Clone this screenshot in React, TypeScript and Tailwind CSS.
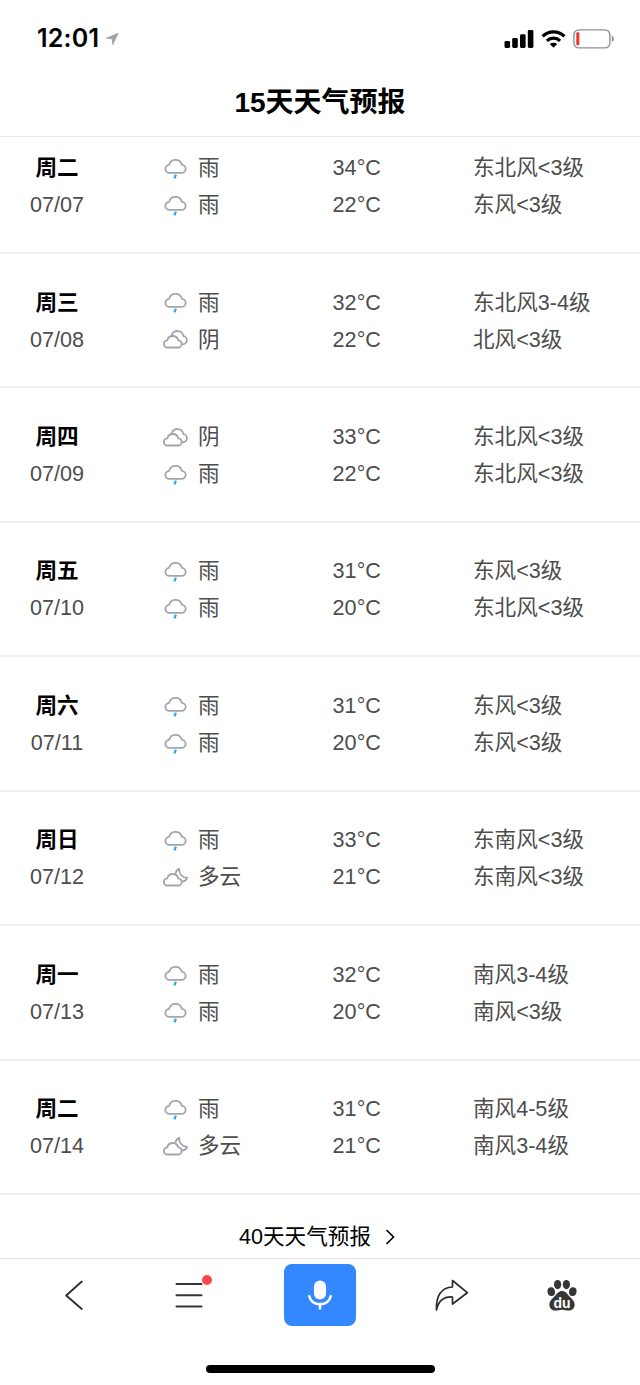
import type { ReactNode } from 'react';

type Weather = 'rain' | 'overcast' | 'cloudy';

interface Forecast {
  weather: Weather;
  temp: number;
  wind: string;
}

interface Day {
  weekday: string;
  date: string;
  day: Forecast;
  night: Forecast;
}

const WEATHER_LABELS: Record<Weather, string> = {
  rain: '雨',
  overcast: '阴',
  cloudy: '多云',
};

const days: Day[] = [
  {
    weekday: '周二',
    date: '07/07',
    day: { weather: 'rain', temp: 34, wind: '东北风<3级' },
    night: { weather: 'rain', temp: 22, wind: '东风<3级' },
  },
  {
    weekday: '周三',
    date: '07/08',
    day: { weather: 'rain', temp: 32, wind: '东北风3-4级' },
    night: { weather: 'overcast', temp: 22, wind: '北风<3级' },
  },
  {
    weekday: '周四',
    date: '07/09',
    day: { weather: 'overcast', temp: 33, wind: '东北风<3级' },
    night: { weather: 'rain', temp: 22, wind: '东北风<3级' },
  },
  {
    weekday: '周五',
    date: '07/10',
    day: { weather: 'rain', temp: 31, wind: '东风<3级' },
    night: { weather: 'rain', temp: 20, wind: '东北风<3级' },
  },
  {
    weekday: '周六',
    date: '07/11',
    day: { weather: 'rain', temp: 31, wind: '东风<3级' },
    night: { weather: 'rain', temp: 20, wind: '东风<3级' },
  },
  {
    weekday: '周日',
    date: '07/12',
    day: { weather: 'rain', temp: 33, wind: '东南风<3级' },
    night: { weather: 'cloudy', temp: 21, wind: '东南风<3级' },
  },
  {
    weekday: '周一',
    date: '07/13',
    day: { weather: 'rain', temp: 32, wind: '南风3-4级' },
    night: { weather: 'rain', temp: 20, wind: '南风<3级' },
  },
  {
    weekday: '周二',
    date: '07/14',
    day: { weather: 'rain', temp: 31, wind: '南风4-5级' },
    night: { weather: 'cloudy', temp: 21, wind: '南风3-4级' },
  },
];

const WeatherIcon = ({ weather }: { weather: Weather }) => (
  <svg
    width="28"
    height="24"
    viewBox="0 0 28 24"
    fill="none"
    stroke="#a4a4ae"
    strokeWidth="1.8"
    strokeLinecap="round"
    strokeLinejoin="round"
  >
    {weather === 'rain' && (
      <>
        <path d="M7.6 16.9a4 4 0 0 1-.5-8 6.6 6.6 0 0 1 12.8 0 4 4 0 0 1-.5 8z" />
        <path d="M13.9 18.600l-1.500 3.800" stroke="#2ba7e8" strokeWidth="2.200" strokeLinecap="butt" />
      </>
    )}
    {weather === 'overcast' && (
      <>
        <path d="M5.6 20.500a3.600 3.600 0 0 1-.3-7.200 5.600 5.600 0 0 1 10.900 0 3.600 3.600 0 0 1-.3 7.200z" />
        <path d="M9.800 8a6 6 0 0 1 11.600 1.200 4 4 0 0 1-1 8" />
      </>
    )}
    {weather === 'cloudy' && (
      <>
        <path d="M5.6 20.500a3.600 3.600 0 0 1-.3-7.200 5.600 5.600 0 0 1 10.900 0 3.600 3.600 0 0 1-.3 7.200z" />
        <path d="M13.600 8.200c.3-2.100 1.500-3.600 3.600-4.400-.4 4.800 2.600 8.600 8 9.200-1 2.100-2.500 3.200-4.600 3.500" />
      </>
    )}
  </svg>
);

const StatusBar = () => (
  <div className="flex h-[76px] items-center justify-between pl-[37px] pr-[25px] pt-px">
    <div className="flex items-center gap-[7px]">
      <span className="font-['Inter',sans-serif] text-[25px] font-semibold leading-none tracking-[0.2px]">
        12:01
      </span>
      <svg width="13" height="12" viewBox="0 0 13 12" fill="#a3a3a3">
        <path d="M12.200.2L.3 5.200l5.900.6.6 5.800z" stroke="#a3a3a3" strokeWidth=".8" />
      </svg>
    </div>
    <div className="flex items-center gap-[7px]">
      <svg width="30" height="18" viewBox="0 0 30 18">
        <rect x=".5" y="11" width="5.600" height="7" rx="1.400" />
        <rect x="8.200" y="8" width="5.600" height="10" rx="1.400" />
        <rect x="16" y="4.300" width="5.600" height="13.700" rx="1.400" />
        <rect x="23.800" y="0" width="5.600" height="18" rx="1.400" />
      </svg>
      <svg width="25" height="18" viewBox="0 0 25 18">
        <g fill="none" stroke="#000" strokeWidth="3.200">
          <path d="M1.600 6.300a15.800 15.800 0 0 1 21.800 0" />
          <path d="M5.900 10.800a9.600 9.600 0 0 1 13.200 0" />
        </g>
        <path d="M12.500 17.800l-3.700-3.700a5.400 5.400 0 0 1 7.400 0z" />
      </svg>
      <svg width="42" height="20" viewBox="0 0 42 20">
        <rect x=".9" y=".9" width="36" height="18" rx="5" fill="none" stroke="#919191" strokeWidth="1.400" />
        <rect x="3.300" y="3.300" width="3" height="13" rx="1" fill="#f0352b" />
        <path d="M38.800 6.800c2.800.8 2.800 5.400 0 6.200z" fill="#919191" />
      </svg>
    </div>
  </div>
);

const ForecastLine = ({ weather, temp, wind }: Forecast) => (
  <div className="flex h-[37px] items-center">
    <div className="flex w-[170.6px] items-center gap-2">
      <WeatherIcon weather={weather} />
      <span>{WEATHER_LABELS[weather]}</span>
    </div>
    <span className="w-[140.4px]">{temp}°C</span>
    <span>{wind}</span>
  </div>
);

const DayRow = ({ weekday, date, day, night }: Day) => (
  <li className="flex h-[134.45px] items-end border-b-2 border-[#f0f0f0] pb-[28.6px] first:h-[117px]">
    <div className="mr-12 w-[114px] text-center">
      <div className="flex h-[37px] items-center justify-center font-bold text-black">{weekday}</div>
      <div className="flex h-[37px] items-center justify-center">{date}</div>
    </div>
    <div>
      <ForecastLine {...day} />
      <ForecastLine {...night} />
    </div>
  </li>
);

const ToolbarButton = ({ label, children }: { label: string; children: ReactNode }) => (
  <button aria-label={label} className="flex h-[62px] w-[72px] items-center justify-center">
    {children}
  </button>
);

const Toolbar = () => (
  <nav className="grid h-[73px] grid-cols-[115px_131px_132px_110px_72px] items-start border-t border-[#e2e2e2] pl-[38px] pt-[5px]">
    <ToolbarButton label="返回">
      <svg width="20" height="32" viewBox="0 0 20 32" fill="none" stroke="#2d2b2c" strokeWidth="1.800">
        <path d="M17.800 2.500L2.200 16.500l15.600 13.500" strokeLinecap="round" strokeLinejoin="round" />
      </svg>
    </ToolbarButton>
    <ToolbarButton label="菜单">
      <span className="relative">
        <svg width="28" height="28" viewBox="0 0 28 28" stroke="#383434" strokeWidth="2" strokeLinecap="round">
          <path d="M1.500 3h25M1.500 14.300h25M1.500 25.600h25" />
        </svg>
        <span className="absolute -right-[9px] -top-[6px] size-[10px] rounded-full bg-[#fb4a4c]" />
      </span>
    </ToolbarButton>
    <button aria-label="语音" className="flex h-[62px] w-[72px] items-center justify-center rounded-lg bg-[#3388ff]">
      <svg width="26" height="32" viewBox="0 0 26 32" fill="none">
        <rect x="7" y="1.500" width="12" height="19" rx="6" fill="#fff" />
        <path
          d="M2.300 17.200c1 4.600 5 8 10.700 8s9.700-3.400 10.700-8M13 25v4.500"
          stroke="#fff"
          strokeWidth="2.600"
          strokeLinecap="round"
        />
      </svg>
    </button>
    <ToolbarButton label="分享">
      <svg width="34" height="34" viewBox="0 0 34 34" fill="none" stroke="#2d2b2c" strokeWidth="1.700" strokeLinejoin="round">
        <path d="M17.500 2.500l14.800 12.200L17.500 26v-7C9 18.500 3.500 22.500 1.500 32 .8 18.500 6 9.300 17.500 9z" />
      </svg>
    </ToolbarButton>
    <ToolbarButton label="百度">
      <svg width="30" height="32" viewBox="0 0 30 32" fill="#363636">
        <ellipse cx="10.600" cy="5.600" rx="3.600" ry="4.600" />
        <ellipse cx="19.400" cy="5.600" rx="3.600" ry="4.600" />
        <ellipse cx="4.200" cy="12.700" rx="3.700" ry="4.400" transform="rotate(-10 4.200 12.700)" />
        <ellipse cx="25.800" cy="12.700" rx="3.700" ry="4.400" transform="rotate(10 25.800 12.700)" />
        <path d="M15 12c3.400 0 4.800 2.500 7 4.900 2.800 3 5.600 4.800 5.600 8.500 0 4-2.700 6.200-6.100 6.200-2.500 0-4-.8-6.500-.8s-4 .8-6.500.8c-3.400 0-6.100-2.200-6.100-6.200 0-3.700 2.800-5.500 5.600-8.500 2.200-2.400 3.600-4.900 7-4.900z" />
        <text
          x="15"
          y="28.500"
          textAnchor="middle"
          fill="#fff"
          className="font-['Liberation_Sans',sans-serif] text-[14px] font-bold"
        >
          du
        </text>
      </svg>
    </ToolbarButton>
  </nav>
);

export default function App() {
  return (
    <div className="flex h-[1385px] w-[640px] flex-col overflow-hidden bg-white font-['Liberation_Sans','Noto_Sans_CJK_SC',sans-serif] text-[21.6px] leading-none text-[#4d4d4d]">
      <header className="h-[137px] shrink-0 border-b border-[#e8e8e8] text-black">
        <StatusBar />
        <h1 className="flex h-[54px] items-center justify-center text-[28px] font-bold">15天天气预报</h1>
      </header>
      <ul className="shrink-0">
        {days.map((day) => (
          <DayRow key={day.date} {...day} />
        ))}
      </ul>
      <a className="flex h-[63px] shrink-0 items-center justify-center gap-[14px] pr-[6px] pt-[21px] text-black">
        <span>40天天气预报</span>
        <svg width="10" height="16" viewBox="0 0 10 16" fill="none" stroke="#000" strokeWidth="1.600">
          <path d="M1.500 1l7 7-7 7" />
        </svg>
      </a>
      <Toolbar />
      <div className="mx-auto mt-[34px] h-2 w-[229px] rounded-full bg-black" />
    </div>
  );
}
